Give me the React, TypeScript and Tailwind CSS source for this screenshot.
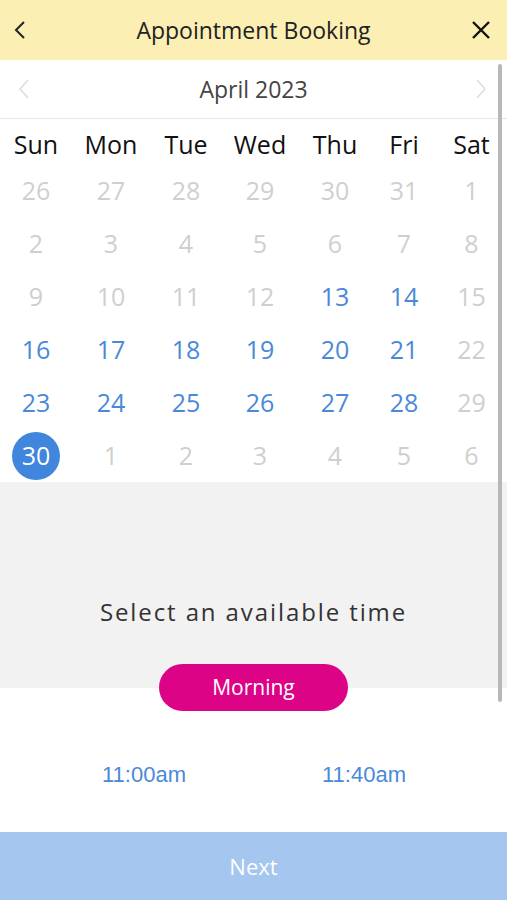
import React from "react";

const weekdays = ["Sun", "Mon", "Tue", "Wed", "Thu", "Fri", "Sat"];

type Day = { n: number; s: "off" | "on" | "sel" };

const rows: Day[][] = [
  [26, 27, 28, 29, 30, 31, 1].map((n) => ({ n, s: "off" as const })),
  [2, 3, 4, 5, 6, 7, 8].map((n) => ({ n, s: "off" as const })),
  [
    { n: 9, s: "off" },
    { n: 10, s: "off" },
    { n: 11, s: "off" },
    { n: 12, s: "off" },
    { n: 13, s: "on" },
    { n: 14, s: "on" },
    { n: 15, s: "off" },
  ],
  [
    { n: 16, s: "on" },
    { n: 17, s: "on" },
    { n: 18, s: "on" },
    { n: 19, s: "on" },
    { n: 20, s: "on" },
    { n: 21, s: "on" },
    { n: 22, s: "off" },
  ],
  [
    { n: 23, s: "on" },
    { n: 24, s: "on" },
    { n: 25, s: "on" },
    { n: 26, s: "on" },
    { n: 27, s: "on" },
    { n: 28, s: "on" },
    { n: 29, s: "off" },
  ],
  [
    { n: 30, s: "sel" },
    { n: 1, s: "off" },
    { n: 2, s: "off" },
    { n: 3, s: "off" },
    { n: 4, s: "off" },
    { n: 5, s: "off" },
    { n: 6, s: "off" },
  ],
];

const cols = "grid grid-cols-[72px_78px_72px_76px_74px_64px_1fr]";

export default function App() {
  return (
    <div
      className="relative w-[507px] h-[900px] bg-white flex flex-col overflow-hidden"
      style={{ fontFamily: '"Open Sans", "Noto Sans", sans-serif' }}
    >
      {/* Header */}
      <div className="h-[60px] bg-[#fcefb4] grid grid-cols-[52px_1fr_52px] items-center">
        <div className="flex justify-start pl-[11px]">
          <svg width="18" height="22" viewBox="0 0 18 22">
            <path d="M13 3 L5 11 L13 19" fill="none" stroke="#222" strokeWidth="2" />
          </svg>
        </div>
        <div className="text-center text-[23px] text-[#222] leading-none">Appointment Booking</div>
        <div className="flex justify-end pr-[15px]">
          <svg width="22" height="22" viewBox="0 0 22 22">
            <path d="M3 3 L19 19 M19 3 L3 19" fill="none" stroke="#111" strokeWidth="2.4" />
          </svg>
        </div>
      </div>

      {/* Month row */}
      <div className="h-[59px] grid grid-cols-[52px_1fr_52px] items-center border-b border-[#e6e6e6]">
        <div className="flex justify-start pl-[16px]">
          <svg width="16" height="24" viewBox="0 0 16 24">
            <path d="M12 3 L4 12 L12 21" fill="none" stroke="#dcdcdc" strokeWidth="1.5" />
          </svg>
        </div>
        <div className="text-center text-[23px] text-[#444] leading-none">April 2023</div>
        <div className="flex justify-end pr-[18px]">
          <svg width="16" height="24" viewBox="0 0 16 24">
            <path d="M4 3 L12 12 L4 21" fill="none" stroke="#dcdcdc" strokeWidth="1.5" />
          </svg>
        </div>
      </div>

      {/* Weekdays */}
      <div className={`${cols} h-[45px] items-center pt-[5px]`}>
        {weekdays.map((w) => (
          <div key={w} className="text-center text-[25px] text-[#111] leading-none">
            {w}
          </div>
        ))}
      </div>

      {/* Dates */}
      <div className="flex flex-col">
        {rows.map((r, i) => (
          <div key={i} className={`${cols} h-[53px] items-center`}>
            {r.map((d, j) => (
              <div key={j} className="flex justify-center">
                {d.s === "sel" ? (
                  <div className="w-[48px] h-[48px] rounded-full bg-[#3f86dc] text-white text-[25px] flex items-center justify-center leading-none">
                    {d.n}
                  </div>
                ) : (
                  <div
                    className={`text-[25px] leading-none ${
                      d.s === "on" ? "text-[#4a89d8]" : "text-[#cfcfcf]"
                    }`}
                  >
                    {d.n}
                  </div>
                )}
              </div>
            ))}
          </div>
        ))}
      </div>

      {/* Gray section */}
      <div className="h-[206px] bg-[#f2f2f2] flex flex-col items-center justify-end pb-[64px]">
        <div className="text-[24px] text-[#333] tracking-[1.9px] leading-none">
          Select an available time
        </div>
      </div>

      {/* Morning pill */}
      <div className="flex justify-center -mt-[24px] relative">
        <div className="w-[189px] h-[47px] rounded-full bg-[#dd0386] text-white text-[21px] flex items-center justify-center leading-none">
          Morning
        </div>
      </div>

      {/* Times */}
      <div className="flex-1 grid grid-cols-2 pl-[34px] pr-[33px] items-center pt-[6px]">
        <div
          className="text-center text-[22px] text-[#4a89d8] leading-none"
          style={{ fontFamily: '"Liberation Sans", Arial, sans-serif' }}
        >
          11:00am
        </div>
        <div
          className="text-center text-[22px] text-[#4a89d8] leading-none"
          style={{ fontFamily: '"Liberation Sans", Arial, sans-serif' }}
        >
          11:40am
        </div>
      </div>

      {/* Next */}
      <div className="h-[68px] bg-[#a5c6ee] flex items-center justify-center text-white text-[22px] leading-none">
        Next
      </div>

      {/* Scrollbar overlay */}
      <div className="absolute left-[498px] top-[64px] w-[4px] h-[638px] bg-[#b8b8b8] rounded-full" />
    </div>
  );
}
